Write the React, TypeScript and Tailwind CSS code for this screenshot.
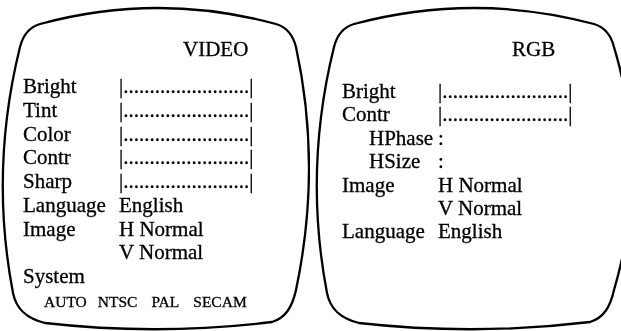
const bar = '|' + '.'.repeat(24) + '|';

// outline of a picture tube, in the panel's own coordinates
const tubePath = (dl: number, dr: number, bulge: number) => {
  const l = (x: number) => x + dl;
  const r = (x: number) => x + dr;
  return [
    `M ${l(40)} 24`,
    `Q ${(l(40) + r(276)) / 2} -8 ${r(276)} 24`,
    `C ${r(286)} 27 ${r(293)} 35 ${r(296)} 47`,
    `Q ${r(bulge)} 167 ${r(296)} 290`,
    `C ${r(292)} 308 ${r(285)} 318 ${r(272)} 322`,
    `Q ${(l(45) + r(272)) / 2} 336 ${l(45)} 323`,
    `C ${l(25)} 318 ${l(16)} 308 ${l(13)} 293`,
    `Q ${l(-10.5)} 170 ${l(20)} 47`,
    `C ${l(23)} 35 ${l(30)} 27 ${l(40)} 24 Z`,
  ].join(' ');
};

const Tube = ({ dl, dr, bulge }: { dl: number; dr: number; bulge: number }) => (
  <svg className="absolute inset-0 w-full h-full" aria-hidden="true">
    <path d={tubePath(dl, dr, bulge)} fill="none" stroke="#000" strokeWidth={2.3} />
  </svg>
);

type Row = { label: string; value?: string; indent?: boolean };

const videoRows: Row[] = [
  { label: 'Bright', value: bar },
  { label: 'Tint', value: bar },
  { label: 'Color', value: bar },
  { label: 'Contr', value: bar },
  { label: 'Sharp', value: bar },
  { label: 'Language', value: 'English' },
  { label: 'Image', value: 'H Normal' },
  { label: '', value: 'V Normal' },
  { label: 'System' },
];

const rgbRows: Row[] = [
  { label: 'Bright', value: bar },
  { label: 'Contr', value: bar },
  { label: 'HPhase', value: ':', indent: true },
  { label: 'HSize', value: ':', indent: true },
  { label: 'Image', value: 'H Normal' },
  { label: '', value: 'V Normal' },
  { label: 'Language', value: 'English' },
];

const MenuRows = ({ rows }: { rows: Row[] }) => (
  <div className="relative grid grid-cols-[96px_1fr]">
    {rows.map((row, i) => (
      <div key={i} className="contents">
        <span className={row.indent ? 'pl-[27px] whitespace-nowrap' : 'whitespace-nowrap'}>{row.label}</span>
        <span className="whitespace-nowrap">{row.value}</span>
      </div>
    ))}
  </div>
);

export default function App() {
  return (
    <div className="flex w-[621px] h-[331px] overflow-hidden bg-white text-black text-[21px] [font-family:'Liberation_Serif','Times_New_Roman',serif] [will-change:transform] [-webkit-text-stroke:0.3px_#000]">
      <div className="relative w-[310px] h-full shrink-0 pt-[38px] pl-[23px] leading-[23.75px]">
        <Tube dl={0} dr={0} bulge={322} />
        <div className="relative pl-[160px]">VIDEO</div>
        <div className="mt-[13.25px]">
          <MenuRows rows={videoRows} />
        </div>
        <div className="relative mt-[4.25px] flex text-[15.5px] leading-[18px]">
          <span className="ml-[21px]">AUTO</span>
          <span className="ml-[11px]">NTSC</span>
          <span className="ml-[14px]">PAL</span>
          <span className="ml-[14px]">SECAM</span>
        </div>
      </div>
      <div className="relative flex-1 h-full pt-[38px] pl-[32px] leading-[23.4px]">
        <Tube dl={4} dr={8} bulge={332} />
        <div className="relative pl-[170px]">RGB</div>
        <div className="mt-[18.6px]">
          <MenuRows rows={rgbRows} />
        </div>
      </div>
    </div>
  );
}
